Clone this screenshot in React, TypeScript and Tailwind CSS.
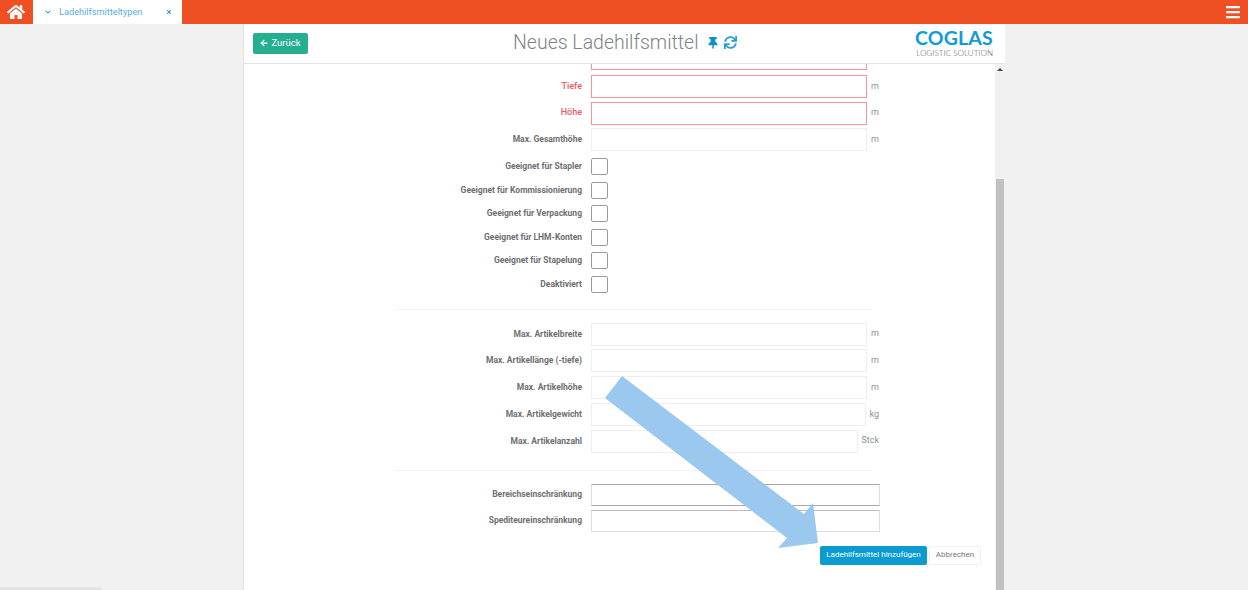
import React from 'react';
import { FaArrowLeft, FaBars, FaChevronDown, FaHome, FaSync, FaThumbtack, FaTimes } from 'react-icons/fa';

const checks = [
  'Geeignet für Stapler',
  'Geeignet für Kommissionierung',
  'Geeignet für Verpackung',
  'Geeignet für LHM-Konten',
  'Geeignet für Stapelung',
  'Deaktiviert',
];

const sizes = [
  { label: 'Max. Artikelbreite', unit: 'm' },
  { label: 'Max. Artikellänge (-tiefe)', unit: 'm' },
  { label: 'Max. Artikelhöhe', unit: 'm' },
  { label: 'Max. Artikelgewicht', unit: 'kg' },
  { label: 'Max. Artikelanzahl', unit: 'Stck' },
];

const Label = ({ text, error }: { text: string; error?: boolean }) => (
  <div className={`w-[338px] shrink-0 text-right ${error ? 'text-[9px] font-medium text-[#ee5a5f]' : 'text-[8.5px] font-bold text-[#6d6f72]'}`}>
    {text}
  </div>
);

const InputRow = ({ label, unit, error }: { label: string; unit: string; error?: boolean }) => (
  <div className="flex h-[23px] items-center gap-[9px]">
    <Label text={label} error={error} />
    <div className={`flex w-[288px] items-center ${unit === 'm' ? 'gap-1' : 'gap-[3px]'}`}>
      <div className={`h-[23px] flex-1 border ${error ? 'border-[#f3939b]' : 'border-[#eeeeee]'}`} />
      <span className="text-[9px] text-[#8d8f92]">{unit}</span>
    </div>
  </div>
);

const App = () => {
  return (
    <div className="relative flex h-[590px] w-[1248px] flex-col overflow-hidden bg-[#f1f1f1] font-['Roboto',sans-serif]">
      <header className="flex h-6 shrink-0 items-center bg-[#ef5023]">
        <div className="flex w-8 justify-center text-white">
          <FaHome size={18} />
        </div>
        <div className="ml-px flex h-6 w-[149px] items-center bg-white pl-[12px] pr-[10px] text-[#2a9bd8]">
          <FaChevronDown size={6} />
          <span className="ml-[8px] flex-1 text-[9.2px] text-[#5aaee0]">Ladehilfsmitteltypen</span>
          <FaTimes size={6} />
        </div>
        <div className="ml-auto mr-[7px] text-white">
          <FaBars size={16} />
        </div>
      </header>

      <main className="ml-[243px] flex min-h-0 w-[762px] flex-1 flex-col border-l border-[#e4e4e4] bg-white">
        <div className="flex h-10 shrink-0 items-center border-b border-[#e3e3e3] pl-[9px] pr-3">
          <button className="mb-px flex h-[21px] w-[55px] items-center justify-center gap-[3px] rounded-[2px] bg-[#26ae90] text-[9.5px] text-white">
            <FaArrowLeft size={8} />
            Zurück
          </button>
          <div className="mb-[2px] ml-[205px] flex items-center">
            <h1 className="text-[19.5px] font-light text-[#7d8388]">Neues Ladehilfsmittel</h1>
            <FaThumbtack className="ml-[8px] text-[#0d8fcc]" size={12} />
            <FaSync className="ml-[5px] text-[#2a9ed6]" size={13} />
          </div>
          <div className="ml-auto flex flex-col items-end">
            <span className="font-['Lato',sans-serif] text-[19.5px] leading-[19px] font-bold tracking-[0.2px] text-[#0f9bd7]">COGLAS</span>
            <span className="font-['Lato',sans-serif] text-[8.1px] leading-[12px] font-light text-[#55575a]">LOGISTIC SOLUTION</span>
          </div>
        </div>

        <div className="flex min-h-0 flex-1">
          <div className="flex flex-1 flex-col">
            <div className="flex">
              <div className="ml-[347px] h-[6px] w-[276px] border-x border-b border-[#f3939b]" />
            </div>

            <div className="mt-[5px] flex flex-col gap-[3.5px]">
              <InputRow label="Tiefe" unit="m" error />
              <InputRow label="Höhe" unit="m" error />
              <InputRow label="Max. Gesamthöhe" unit="m" />
            </div>

            <div className="mt-[7px] flex flex-col gap-[6.5px]">
              {checks.map((c) => (
                <div key={c} className="flex h-[17px] items-center gap-[9px]">
                  <Label text={c} />
                  <div className="h-[17px] w-[17px] rounded-[2px] border border-[#9a9a9a]" />
                </div>
              ))}
            </div>

            <div className="ml-[152px] mt-[16px] h-px w-[476px] bg-[#f1f1f1]" />

            <div className="mt-[13px] flex flex-col gap-[3.75px]">
              {sizes.map((s) => (
                <InputRow key={s.label} label={s.label} unit={s.unit} />
              ))}
            </div>

            <div className="ml-[152px] mt-[17px] h-px w-[476px] bg-[#f1f1f1]" />

            <div className="mt-[13px] flex flex-col gap-1">
              {['Bereichseinschränkung', 'Spediteureinschränkung'].map((t, i) => (
                <div key={t} className="flex h-[22px] items-center gap-[9px]">
                  <Label text={t} />
                  <div className={`h-[22px] w-[289px] border border-[#dddddd] ${i === 0 ? 'border-t-[#a9a9a9] border-b-[#a9a9a9]' : 'border-t-[#bbbbbb]'}`} />
                </div>
              ))}
            </div>

            <div className="mt-[14px] flex justify-end gap-[2px] pr-[14px]">
              <button className="h-[19px] w-[107px] rounded-[2px] bg-[#0a9bd0] text-[8px] text-white">
                Ladehilfsmittel hinzufügen
              </button>
              <button className="h-[19px] w-[52px] rounded-[2px] border border-[#f0f0f0] bg-white text-[8px] text-[#77797c]">
                Abbrechen
              </button>
            </div>
          </div>

          <div className="flex w-[10px] shrink-0 flex-col items-center bg-[#f1f1f1]">
            <div className="mt-[4px] h-0 w-0 border-x-[3px] border-b-[3px] border-x-transparent border-b-[#444444]" />
            <div className="mt-[108px] w-[8px] flex-1 bg-[#c1c1c1]" />
          </div>
        </div>
      </main>

      {/* annotation arrow over the form */}
      <svg className="absolute left-0 top-0" width="1248" height="590" viewBox="0 0 1248 590">
        <polygon points="622,376 804,514 813,503 818,543 778,548 787,538 605,398" fill="#9ac8ee" />
      </svg>

      <div className="absolute bottom-0 left-0 h-[3px] w-[102px] rounded-tr-[2px] bg-[#e3e3e3]" />
    </div>
  );
};

export default App;
